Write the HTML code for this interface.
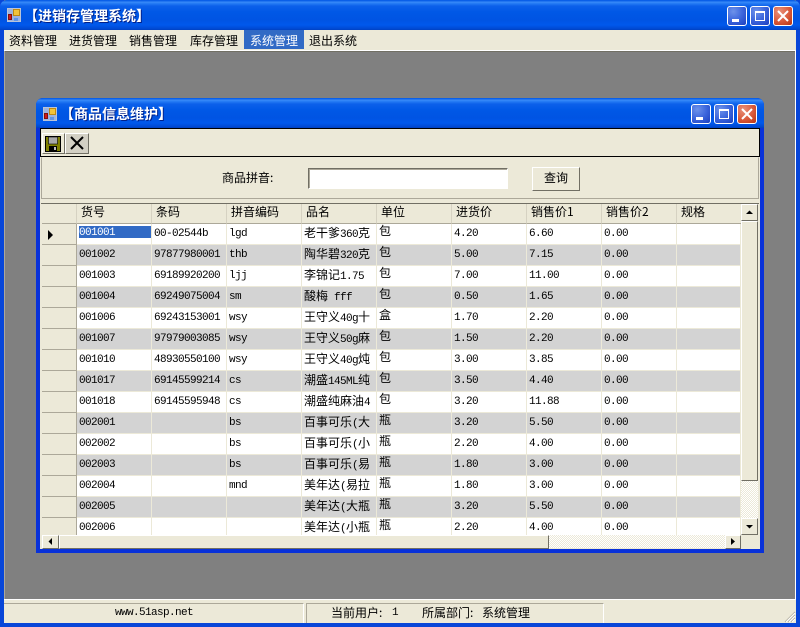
<!DOCTYPE html>
<html lang="zh"><head><meta charset="utf-8"><title>进销存管理系统</title>
<style>
html,body{margin:0;padding:0;background:#808080}
body{width:800px;height:627px;position:relative;overflow:hidden;font:12px "WenQuanYi Zen Hei","Noto Sans CJK SC",sans-serif;color:#000}
.a{position:absolute}
.tb{background:linear-gradient(#0A5FE8 0,#0A5FE8 1px,#3C8CF8 2px,#2A80F6 3px,#0C60EA 6px,#0058E6 12px,#0054E3 20px,#0058EC 25px,#0048D0 29px,#0040C0 30px)}
.tt{color:#fff;font-weight:bold;font-size:14px;line-height:16px;white-space:nowrap;text-shadow:1px 1px 0 #00208a}
.btn{width:20px;height:20px;border:1px solid #fff;border-radius:3px;box-sizing:border-box;background:radial-gradient(circle at 30% 25%,#6d92ea 0,#3c66dc 50%,#1c3fc0 100%)}
.btn.x{background:radial-gradient(circle at 30% 25%,#e8917a 0,#d9593a 55%,#b83310 100%)}
.btn svg{position:absolute;left:0;top:0}
.m{top:34px;line-height:13px;white-space:nowrap}
.r{border:1px solid;border-color:#fff #808080 #808080 #fff;box-sizing:border-box;background:#ECE9D8}
.l{font-family:"Liberation Mono",monospace;font-size:11px;letter-spacing:-.6px}
.c{font-family:"WenQuanYi Zen Hei","Noto Sans CJK SC",sans-serif;font-size:12px;letter-spacing:0;line-height:14px}
table{border-collapse:separate;border-spacing:0;table-layout:fixed;width:699px;font-family:"Liberation Mono",monospace;font-size:11px;letter-spacing:-.6px}
td,th{padding:0;overflow:hidden;white-space:nowrap;text-align:left;font-weight:normal}
th{background:#ECE9D8;border-bottom:1px solid #ACA899;border-right:1px solid #D6D2C2;padding:1px 0 0 4px;font-family:"WenQuanYi Zen Hei","Noto Sans CJK SC",sans-serif;font-size:12px;letter-spacing:0;line-height:14px;vertical-align:top;box-sizing:border-box;height:20px}
td{border-bottom:1px solid #ECE9D8;border-right:1px solid #ECE9D8;padding:3px 0 0 2px;background:#fff;line-height:14px;box-sizing:content-box;height:17px;vertical-align:top}
td:nth-child(5){padding-top:2px;height:18px}
tr.g td{background:#D3D3D3}
td.h,tr.g td.h{background:#ECE9D8;border-right:1px solid #ACA899;border-bottom:1px solid #ACA899;padding:0;height:20px}
td.u{padding-top:0;height:20px}
.sb{background:#ECE9D8;border:1px solid;border-color:#fff #716F64 #716F64 #fff;box-sizing:border-box}
.ht{background:repeating-conic-gradient(#fff 0 25%,#ECE9D8 0 50%) 0 0/2px 2px}
</style></head><body>

<!-- outer window -->
<div class="a" style="left:0;top:0;width:4px;height:627px;background:#0846D8"></div>
<div class="a" style="left:796px;top:0;width:4px;height:627px;background:#0846D8"></div>
<div class="a tb" style="left:0;top:0;width:800px;height:30px;border-radius:7px 7px 0 0"></div>
<svg class="a" style="left:7px;top:8px" width="15" height="15"><rect x=".5" y=".5" width="13" height="13" fill="#9db4e0" stroke="#b9c4d8"/><rect x="6.5" y="1.5" width="6" height="6" fill="#f3c43a" stroke="#c08a10"/><rect x="1.5" y="6.5" width="3" height="5" fill="#d01818" stroke="#801010"/><rect x="7" y="10" width="4" height="3" fill="#5f95e8"/></svg>
<div class="a tt" style="left:24px;top:8px">【进销存管理系统】</div>
<div class="a btn" style="left:727px;top:6px"><svg width="18" height="18"><rect x="4" y="12" width="7" height="3" fill="#fff"/></svg></div>
<div class="a btn" style="left:750px;top:6px"><svg width="18" height="18"><rect x="4.5" y="4.5" width="9" height="9" fill="none" stroke="#fff"/><rect x="4" y="4" width="10" height="2" fill="#fff"/></svg></div>
<div class="a btn x" style="left:773px;top:6px"><svg width="18" height="18"><path d="M4 4L14 14M14 4L4 14" stroke="#fff" stroke-width="2"/></svg></div>

<div class="a" style="left:4px;top:30px;width:792px;height:20px;background:#ECE9D8"></div>
<div class="a" style="left:4px;top:50px;width:792px;height:1px;background:#fff"></div>
<div class="a m" style="left:9px">资料管理</div>
<div class="a m" style="left:69px">进货管理</div>
<div class="a m" style="left:129px">销售管理</div>
<div class="a m" style="left:190px">库存管理</div>
<div class="a" style="left:244px;top:30px;width:60px;height:19px;background:#316AC5"></div>
<div class="a m" style="left:250px;color:#fff">系统管理</div>
<div class="a m" style="left:309px">退出系统</div>

<!-- MDI area -->
<div class="a" style="left:4px;top:51px;width:792px;height:549px;background:#808080"></div>
<div class="a" style="left:4px;top:51px;width:791px;height:1px;background:#716F64"></div>
<div class="a" style="left:4px;top:51px;width:1px;height:548px;background:#ACA899"></div>
<div class="a" style="left:795px;top:51px;width:1px;height:549px;background:#fff"></div>
<div class="a" style="left:4px;top:599px;width:792px;height:1px;background:#fff"></div>

<!-- status bar -->
<div class="a" style="left:4px;top:600px;width:792px;height:23px;background:#ECE9D8"></div>
<div class="a" style="left:4px;top:603px;width:300px;height:20px;border-top:1px solid #ACA899;border-right:1px solid #fff;box-sizing:border-box"></div>
<div class="a" style="left:306px;top:603px;width:298px;height:20px;border-top:1px solid #ACA899;border-left:1px solid #ACA899;border-right:1px solid #fff;box-sizing:border-box"></div>
<div class="a l" style="left:115px;top:607px;line-height:13px">www.51asp.net</div>
<div class="a" style="left:331px;top:606px;line-height:14px;white-space:nowrap">当前用户:</div>
<div class="a l" style="left:392px;top:606px;line-height:14px">1</div>
<div class="a" style="left:422px;top:606px;line-height:14px;white-space:nowrap">所属部门:</div>
<div class="a" style="left:482px;top:606px;line-height:14px;white-space:nowrap">系统管理</div>
<svg class="a" style="left:783px;top:610px" width="13" height="13"><path d="M12 2L2 12M12 5L5 12M12 8L8 12" stroke="#ACA899" fill="none"/><path d="M12 3L3 12M12 6L6 12M12 9L9 12" stroke="#fff" fill="none"/></svg>
<div class="a" style="left:0;top:623px;width:800px;height:4px;background:#0846D8"></div>

<!-- inner window -->
<div class="a" style="left:36px;top:98px;width:728px;height:455px;background:#0831D9;border-radius:7px 7px 0 0"></div>
<div class="a tb" style="left:36px;top:98px;width:728px;height:30px;border-radius:7px 7px 0 0"></div>
<svg class="a" style="left:43px;top:107px" width="15" height="15"><rect x=".5" y=".5" width="13" height="13" fill="#9db4e0" stroke="#b9c4d8"/><rect x="6.5" y="1.5" width="6" height="6" fill="#f3c43a" stroke="#c08a10"/><rect x="1.5" y="6.5" width="3" height="5" fill="#d01818" stroke="#801010"/><rect x="7" y="10" width="4" height="3" fill="#5f95e8"/></svg>
<div class="a tt" style="left:60px;top:106px">【商品信息维护】</div>
<div class="a btn" style="left:691px;top:104px"><svg width="18" height="18"><rect x="4" y="12" width="7" height="3" fill="#fff"/></svg></div>
<div class="a btn" style="left:714px;top:104px"><svg width="18" height="18"><rect x="4.5" y="4.5" width="9" height="9" fill="none" stroke="#fff"/><rect x="4" y="4" width="10" height="2" fill="#fff"/></svg></div>
<div class="a btn x" style="left:737px;top:104px"><svg width="18" height="18"><path d="M4 4L14 14M14 4L4 14" stroke="#fff" stroke-width="2"/></svg></div>

<div class="a" style="left:40px;top:128px;width:720px;height:421px;background:#ECE9D8"></div>

<!-- toolbar -->
<div class="a" style="left:40px;top:128px;width:720px;height:29px;border:1px solid #000;box-sizing:border-box;background:#ECE9D8"></div>
<div class="a r" style="left:42px;top:133px;width:23px;height:21px;border-color:#fff #716F64 #716F64 #fff"></div>
<svg class="a" style="left:45px;top:136px" width="17" height="16"><rect x=".5" y=".5" width="15" height="15" fill="#808000" stroke="#000"/><rect x="3.5" y="1" width="9" height="7" fill="#a8a8a8" stroke="#000" stroke-width=".6"/><rect x="4" y="10" width="8" height="5" fill="#000"/><rect x="9" y="11" width="2" height="3" fill="#c0c0c0"/></svg>
<div class="a r" style="left:65px;top:133px;width:24px;height:21px;border-color:#fff #716F64 #716F64 #fff;background:#D3D0C4"></div>
<svg class="a" style="left:69px;top:135px" width="17" height="16"><path d="M2 2L14 14M14 2L2 14" stroke="#000" stroke-width="2" fill="none"/></svg>

<!-- search panel -->
<div class="a" style="left:41px;top:157px;width:718px;height:42px;border:1px solid;border-color:#ECE9D8 #ACA899 #ACA899 #ACA899;box-sizing:border-box"></div>
<div class="a" style="left:222px;top:171px;line-height:14px;white-space:nowrap">商品拼音:</div>
<div class="a" style="left:308px;top:168px;width:200px;height:21px;background:#fff;border:1px solid;border-color:#716F64 #fff #fff #716F64;box-sizing:border-box;box-shadow:inset 1px 1px 0 #ACA899"></div>
<div class="a" style="left:532px;top:167px;width:48px;height:24px;background:#ECE9D8;border:1px solid;border-color:#fff #716F64 #716F64 #fff;box-sizing:border-box;text-align:center;line-height:20px">查询</div>

<!-- grid -->
<div class="a" style="left:41px;top:203px;width:718px;height:1px;background:#716F64"></div>
<div class="a" style="left:42px;top:204px;width:699px;height:331px;overflow:hidden;background:#fff">
<table>
<colgroup><col style="width:35px"><col style="width:75px"><col style="width:75px"><col style="width:75px"><col style="width:75px"><col style="width:75px"><col style="width:75px"><col style="width:75px"><col style="width:75px"><col style="width:64px"></colgroup>
<tr><th style="padding:0"></th><th>货号</th><th>条码</th><th>拼音编码</th><th>品名</th><th>单位</th><th>进货价</th><th>销售价1</th><th>销售价2</th><th style="border-right:0">规格</th></tr>
<tr><td class="h"><svg width="34" height="20" style="display:block"><path d="M6 6V16L11 11Z" fill="#000"/></svg></td><td style="color:#fff"><div style="margin-top:-1px;background:#316AC5;height:12px;line-height:14px">001001</div></td><td>00-02544b</td><td>lgd</td><td><span class="c">老干爹</span>360<span class="c">克</span></td><td class="u c">包</td><td>4.20</td><td>6.60</td><td>0.00</td><td></td></tr>
<tr class="g"><td class="h"></td><td>001002</td><td>97877980001</td><td>thb</td><td><span class="c">陶华碧</span>320<span class="c">克</span></td><td class="u c">包</td><td>5.00</td><td>7.15</td><td>0.00</td><td></td></tr>
<tr><td class="h"></td><td>001003</td><td>69189920200</td><td>ljj</td><td><span class="c">李锦记</span>1.75</td><td class="u c">包</td><td>7.00</td><td>11.00</td><td>0.00</td><td></td></tr>
<tr class="g"><td class="h"></td><td>001004</td><td>69249075004</td><td>sm</td><td><span class="c">酸梅</span> fff</td><td class="u c">包</td><td>0.50</td><td>1.65</td><td>0.00</td><td></td></tr>
<tr><td class="h"></td><td>001006</td><td>69243153001</td><td>wsy</td><td><span class="c">王守义</span>40g<span class="c">十</span></td><td class="u c">盒</td><td>1.70</td><td>2.20</td><td>0.00</td><td></td></tr>
<tr class="g"><td class="h"></td><td>001007</td><td>97979003085</td><td>wsy</td><td><span class="c">王守义</span>50g<span class="c">麻</span></td><td class="u c">包</td><td>1.50</td><td>2.20</td><td>0.00</td><td></td></tr>
<tr><td class="h"></td><td>001010</td><td>48930550100</td><td>wsy</td><td><span class="c">王守义</span>40g<span class="c">炖</span></td><td class="u c">包</td><td>3.00</td><td>3.85</td><td>0.00</td><td></td></tr>
<tr class="g"><td class="h"></td><td>001017</td><td>69145599214</td><td>cs</td><td><span class="c">潮盛</span>145ML<span class="c">纯</span></td><td class="u c">包</td><td>3.50</td><td>4.40</td><td>0.00</td><td></td></tr>
<tr><td class="h"></td><td>001018</td><td>69145595948</td><td>cs</td><td><span class="c">潮盛纯麻油</span>4</td><td class="u c">包</td><td>3.20</td><td>11.88</td><td>0.00</td><td></td></tr>
<tr class="g"><td class="h"></td><td>002001</td><td></td><td>bs</td><td><span class="c">百事可乐</span>(<span class="c">大</span></td><td class="u c">瓶</td><td>3.20</td><td>5.50</td><td>0.00</td><td></td></tr>
<tr><td class="h"></td><td>002002</td><td></td><td>bs</td><td><span class="c">百事可乐</span>(<span class="c">小</span></td><td class="u c">瓶</td><td>2.20</td><td>4.00</td><td>0.00</td><td></td></tr>
<tr class="g"><td class="h"></td><td>002003</td><td></td><td>bs</td><td><span class="c">百事可乐</span>(<span class="c">易</span></td><td class="u c">瓶</td><td>1.80</td><td>3.00</td><td>0.00</td><td></td></tr>
<tr><td class="h"></td><td>002004</td><td></td><td>mnd</td><td><span class="c">美年达</span>(<span class="c">易拉</span></td><td class="u c">瓶</td><td>1.80</td><td>3.00</td><td>0.00</td><td></td></tr>
<tr class="g"><td class="h"></td><td>002005</td><td></td><td></td><td><span class="c">美年达</span>(<span class="c">大瓶</span></td><td class="u c">瓶</td><td>3.20</td><td>5.50</td><td>0.00</td><td></td></tr>
<tr><td class="h"></td><td>002006</td><td></td><td></td><td><span class="c">美年达</span>(<span class="c">小瓶</span></td><td class="u c">瓶</td><td>2.20</td><td>4.00</td><td>0.00</td><td></td></tr>
</table>
</div>

<!-- vertical scrollbar -->
<div class="a ht" style="left:741px;top:204px;width:17px;height:331px"></div>
<div class="a sb" style="left:741px;top:204px;width:17px;height:17px"></div>
<svg class="a" style="left:741px;top:204px" width="17" height="17"><path d="M5 10H12L8.5 6.5Z" fill="#000"/></svg>
<div class="a sb" style="left:741px;top:221px;width:17px;height:260px"></div>
<div class="a sb" style="left:741px;top:518px;width:17px;height:17px"></div>
<svg class="a" style="left:741px;top:518px" width="17" height="17"><path d="M5 7H12L8.5 10.5Z" fill="#000"/></svg>

<!-- horizontal scrollbar -->
<div class="a ht" style="left:42px;top:535px;width:699px;height:13px"></div>
<div class="a sb" style="left:42px;top:535px;width:17px;height:14px"></div>
<svg class="a" style="left:42px;top:535px" width="17" height="13"><path d="M10 3V10L6.5 6.5Z" fill="#000"/></svg>
<div class="a sb" style="left:59px;top:535px;width:490px;height:14px"></div>
<div class="a sb" style="left:725px;top:535px;width:16px;height:14px"></div>
<svg class="a" style="left:725px;top:535px" width="16" height="13"><path d="M6 3V10L10 6.5Z" fill="#000"/></svg>
<div class="a" style="left:741px;top:535px;width:19px;height:14px;background:#ECE9D8"></div>
</body></html>
